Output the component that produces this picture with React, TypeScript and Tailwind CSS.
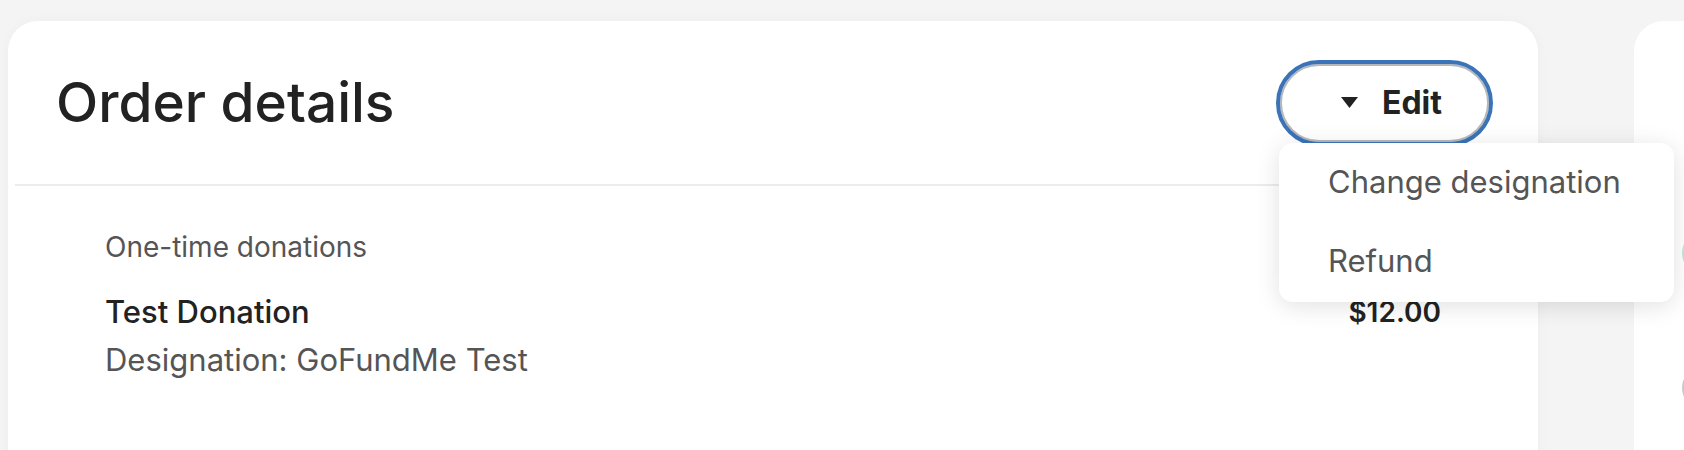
import { useState } from "react";

const font = { fontFamily: "Inter, Lato, sans-serif" };

function Caret() {
  return (
    <svg width="17" height="11" viewBox="0 0 17 11" aria-hidden="true">
      <path d="M0 0h17L8.5 11z" fill="#222" />
    </svg>
  );
}

function EditMenu() {
  const [open] = useState(true);
  return (
    <div className="relative">
      <button className="flex h-[78px] w-[209px] items-center justify-center gap-[24px] rounded-full border-2 border-[#b8b8b8] bg-white pl-[14px] text-[32px] font-bold text-[#222] outline-[4px] outline-offset-[0px] outline-[#3a73b8] outline">
        <Caret />
        <span>Edit</span>
      </button>
      {open && (
        <div className="absolute left-[-1px] top-[79px] z-10 flex w-[395px] flex-col rounded-[14px] bg-white pb-[1px] pl-[49px] shadow-[0_4px_24px_rgba(0,0,0,0.12)]">
          <button className="h-[79px] text-left text-[31px] text-[#555]">Change designation</button>
          <button className="h-[79px] text-left text-[31px] text-[#555]">Refund</button>
        </div>
      )}
    </div>
  );
}

export default function App() {
  return (
    <div style={font} className="flex h-[450px] w-[1684px] gap-[96px] overflow-hidden bg-[#f4f4f4] pl-[8px] pt-[21px]">
      {/* Order details card */}
      <section className="h-[480px] w-[1530px] shrink-0 rounded-[30px] bg-white shadow-[0_0_12px_rgba(0,0,0,0.03)]">
        <header className="flex h-[163px] items-center justify-between pl-[48px] pr-[49px]">
          <h1 className="text-[55px] font-medium leading-none text-[#222]">Order details</h1>
          <EditMenu />
        </header>
        <div className="mx-[7px] h-[2px] bg-[#ececec]" />
        <div className="px-[97px] pt-[44px]">
          <p className="text-[28px] leading-[34px] text-[#555]">One-time donations</p>
          <div className="mt-[30px] flex items-start justify-between">
            <div>
              <p className="text-[31px] font-medium leading-[36px] text-[#222]">Test Donation</p>
              <p className="mt-[11px] text-[31px] leading-[38px] text-[#555]">Designation: GoFundMe Test</p>
            </div>
            <p className="text-[28px] font-semibold leading-[36px] text-[#222]">$12.00</p>
          </div>
        </div>
      </section>

      {/* Next card, mostly off screen */}
      <section className="relative h-[480px] w-[400px] shrink-0 rounded-[30px] bg-white">
        <span className="absolute left-[48px] top-[210px] h-[44px] w-[44px] rounded-full bg-[#bfe6e3]" />
        <span className="absolute left-[48px] top-[345px] h-[44px] w-[44px] rounded-full bg-[#c8c8c8]" />
      </section>
    </div>
  );
}
